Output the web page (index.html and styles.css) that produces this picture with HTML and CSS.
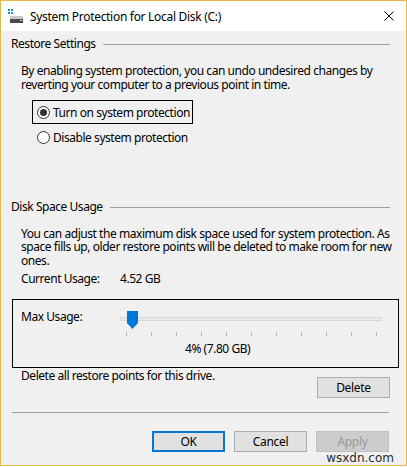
FILE: index.html
```html
<!DOCTYPE html>
<html>
<head>
<meta charset="utf-8">
<link rel="stylesheet" href="styles.css">
</head>
<body>
<div class="window">
  <div class="titlebar">
    <svg class="appicon" width="16" height="16" viewBox="0 0 16 16">
      <rect x="0" y="0" width="2" height="2" fill="#1e8ee0"/>
      <rect x="3" y="0" width="2" height="2" fill="#1e8ee0"/>
      <rect x="0" y="3" width="2" height="2" fill="#1e8ee0"/>
      <rect x="3" y="3" width="2" height="2" fill="#1e8ee0"/>
      <rect x="2" y="7" width="13" height="3" fill="#c9c9c9"/>
      <rect x="2" y="10" width="13" height="4" fill="#4a4a4a"/>
      <rect x="12" y="11" width="2" height="1" fill="#b8d8b8"/>
    </svg>
    <span class="title">System Protection for Local Disk (C:)</span>
    <svg class="close" width="10" height="10" viewBox="0 0 10 10">
      <path d="M0.5 0.5 L9.5 9.5 M9.5 0.5 L0.5 9.5" stroke="#000" stroke-width="1" fill="none"/>
    </svg>
  </div>
  <div class="content">
    <div class="group-head"><span>Restore Settings</span><div class="rule"></div></div>
    <div class="desc first"><div>By enabling system protection, you can undo undesired changes by</div><div>reverting your computer to a previous point in time.</div></div>
    <div class="radios">
      <div class="radio focus"><span class="dot on"></span><span>Turn on system protection</span></div>
      <div class="radio"><span class="dot"></span><span>Disable system protection</span></div>
    </div>
    <div class="group-head disk"><span>Disk Space Usage</span><div class="rule"></div></div>
    <div class="desc second"><div>You can adjust the maximum disk space used for system protection. As</div><div>space fills up, older restore points will be deleted to make room for new</div><div>ones.</div></div>
    <div class="usage"><span class="usage-label">Current Usage:</span><span>4.52 GB</span></div>
    <div class="maxbox">
      <div class="maxrow">
        <span class="max-label">Max Usage:</span>
        <div class="slider">
          <div class="track"></div>
          <svg class="thumb" width="11" height="18" viewBox="0 0 11 18"><path d="M0 0 H11 V12 L5.5 18 L0 12 Z" fill="#0078d7"/></svg>
          <div class="ticks">
            <i></i><i></i><i></i><i></i><i></i><i></i><i></i><i></i><i></i><i></i><i></i>
          </div>
        </div>
      </div>
      <div class="pct">4% (7.80 GB)</div>
    </div>
    <div class="delrow">
      <span>Delete all restore points for this drive.</span>
      <button class="btn">Delete</button>
    </div>
    <div class="sep"></div>
    <div class="buttons">
      <button class="btn default">OK</button>
      <button class="btn">Cancel</button>
      <button class="btn disabled">Apply</button>
    </div>
  </div>
  <div class="watermark">wsxdn.com</div>
</div>
</body>
</html>
```
FILE: styles.css
```css
* { box-sizing: border-box; }
html, body { margin: 0; padding: 0; }
body {
  width: 407px;
  height: 467px;
  overflow: hidden;
  background: #fff;
  font-family: "Noto Sans", "Open Sans", sans-serif;
  font-size: 12px;
  letter-spacing: -0.45px;
  white-space: nowrap;
  color: #000;
}
.window {
  position: relative;
  width: 407px;
  height: 466px;
  border: 1px solid #e8b84a;
  background: #f0f0f0;
  display: flex;
  flex-direction: column;
  overflow: hidden;
}
.titlebar {
  height: 30px;
  flex: none;
  background: #fff;
  display: flex;
  align-items: center;
  padding-left: 7px;
  padding-right: 12px;
}
.appicon { flex: none; margin-top: 1px; }
.title { margin-left: 6px; flex: 1; line-height: 15px; letter-spacing: -0.3px; }
.close { flex: none; margin-top: -1px; }

.content {
  flex: 1;
  padding: 0 7px 0 10px;
  display: flex;
  flex-direction: column;
}
.group-head {
  display: flex;
  align-items: center;
  height: 15px;
  line-height: 15px;
  margin-top: 5px;
  margin-right: 9px;
  flex: none;
}
.group-head.disk { margin-top: 50px; }
.rule { flex: 1; height: 1px; background: #a0a0a0; margin-left: 7px; margin-top: 1px; }

.desc { margin: 0 0 0 10px; flex: none; }
.desc div { height: 13.5px; line-height: 13.5px; }
.desc.first { margin-top: 13px; }
.desc.second { margin-top: 12.5px; }

.radios { margin: 9px 0 0 21px; display: flex; flex-direction: column; gap: 1px; }
.radio {
  width: 161px;
  height: 24px;
  border: 1px solid transparent;
  display: flex;
  align-items: center;
  padding-left: 4px;
  line-height: 15px;
}
.radio.focus { border-color: #000; }
.dot {
  width: 13px;
  height: 13px;
  border: 1px solid #333;
  border-radius: 50%;
  background: #fff;
  margin-right: 3px;
  flex: none;
  display: flex;
  align-items: center;
  justify-content: center;
}
.dot.on::after {
  content: "";
  width: 7px;
  height: 7px;
  border-radius: 50%;
  background: #333;
}

.usage { margin: 3.5px 0 0 10px; line-height: 15px; display: flex; flex: none; }
.usage-label { width: 99px; }

.maxbox {
  margin: 13px 0 0 1px;
  height: 69px;
  flex: none;
  border: 1px solid #000;
  padding: 9px 0 0 8px;
}
.maxrow { display: flex; align-items: flex-start; }
.max-label { width: 99px; line-height: 15px; }
.slider {
  position: relative;
  width: 262px;
  height: 25px;
  margin-top: 2px;
}
.track {
  position: absolute;
  left: 0;
  right: 0;
  top: 6px;
  height: 4px;
  background: #e7eaea;
  border: 1px solid #d6d6d6;
}
.thumb { position: absolute; left: 7px; top: 0; }
.ticks {
  position: absolute;
  left: 6px;
  width: 251px;
  top: 21px;
  height: 4px;
  display: flex;
  justify-content: space-between;
}
.ticks i { display: block; width: 1px; height: 4px; background: #b5b5b5; }
.pct { margin: 5px 0 0 164px; line-height: 15px; }

.delrow { display: flex; justify-content: space-between; align-items: flex-start; margin: 0 9px 0 10px; line-height: 15px; flex: none; }
.delrow .btn { margin-top: 9px; }

.btn {
  width: 73px;
  height: 21px;
  flex: none;
  padding: 0;
  font-family: inherit;
  font-size: 12px;
  letter-spacing: -0.3px;
  color: #000;
  background: #e1e1e1;
  border: 1px solid #adadad;
  border-radius: 0;
  line-height: 15px;
}
.btn.default { border: 2px solid #0078d7; }
.btn.disabled { background: #cccccc; border-color: #bfbfbf; color: #9a9a9a; }

.sep { height: 1px; flex: none; background: #a0a0a0; margin: 14px 10px 0 1px; }
.buttons { display: flex; justify-content: flex-end; gap: 9px; margin: 18px 10px 0 0; flex: none; }

.watermark {
  position: absolute;
  right: 12px;
  bottom: 0px;
  font-family: "DejaVu Sans", sans-serif;
  font-size: 12px;
  letter-spacing: 0;
  color: #2a2a2a;
  line-height: 14px;
}
```
